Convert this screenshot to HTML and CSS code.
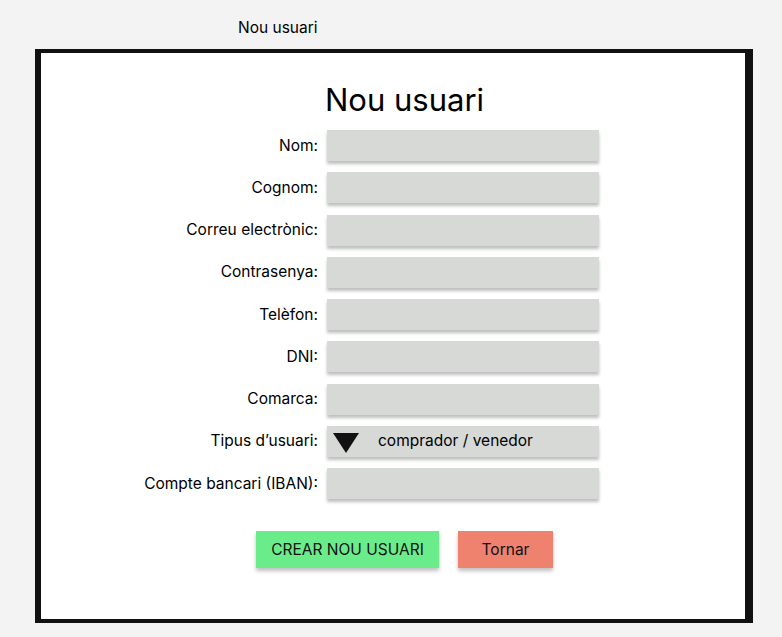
FILE: index.html
```html
<!DOCTYPE html>
<html lang="ca">
<head>
  <meta charset="UTF-8">
  <title>Nou usuari</title>
  <link rel="stylesheet" href="styles.css">
</head>
<body>
  <div class="page-title">Nou usuari</div>

  <!-- Frame -->
  <div class="frame">
    <h1 class="heading">Nou usuari</h1>

    <form class="user-form" onsubmit="return false">
      <label for="nom">Nom:</label>
      <input type="text" id="nom" class="field">

      <label for="cognom">Cognom:</label>
      <input type="text" id="cognom" class="field">

      <label for="correu">Correu electrònic:</label>
      <input type="text" id="correu" class="field">

      <label for="contrasenya">Contrasenya:</label>
      <input type="password" id="contrasenya" class="field">

      <label for="telefon">Telèfon:</label>
      <input type="text" id="telefon" class="field">

      <label for="dni">DNI:</label>
      <input type="text" id="dni" class="field">

      <label for="comarca">Comarca:</label>
      <input type="text" id="comarca" class="field">

      <label>Tipus d’usuari:</label>
      <div class="field select">
        <svg class="arrow" width="26" height="20" viewBox="0 0 26 20"><polygon points="0,0 26,0 13,20" fill="#111"/></svg>
        <span>comprador / venedor</span>
      </div>

      <label for="iban">Compte bancari (IBAN):</label>
      <input type="text" id="iban" class="field">
    </form>

    <div class="actions">
      <button class="btn btn-create">CREAR NOU USUARI</button>
      <button class="btn btn-back">Tornar</button>
    </div>
  </div>
</body>
</html>
```

FILE: styles.css
```css
body {
  margin: 0;
  background: #f3f3f3;
  font-family: Inter, "Liberation Sans", sans-serif;
  font-size: 15.5px;
  color: #000;
}
.page-title {
  padding: 19px 0 0 238px;
  line-height: 18px;
}
.frame {
  box-sizing: border-box;
  width: 718px;
  height: 574px;
  margin: 12px 0 0 35px;
  background: #fff;
  border: 4px solid #111;
  border-left-width: 6px;
  border-right-width: 8px;
}
.heading {
  margin: 28px 0 0 0;
  padding-left: 284px;
  font-size: 31px;
  font-weight: 400;
  line-height: 37px;
}
.user-form {
  display: grid;
  grid-template-columns: 181px 272px;
  column-gap: 9px;
  row-gap: 11.25px;
  align-items: center;
  margin: 12px 0 0 96px;
}
.user-form label {
  text-align: right;
  line-height: 18px;
}
.field {
  box-sizing: border-box;
  height: 31px;
  margin: 0;
  border: none;
  background: #d6d9d6;
  box-shadow: 0 3px 3px rgba(0, 0, 0, 0.25);
  font: inherit;
  padding: 0 8px;
}
.select {
  display: flex;
  align-items: center;
  gap: 19px;
  padding-left: 6px;
}
.select .arrow {
  margin-top: 3px;
  flex-shrink: 0;
}
.select span {
  margin-top: -2px;
}
.actions {
  display: flex;
  gap: 19px;
  margin: 32px 0 0 215px;
}
.btn {
  height: 37px;
  border: none;
  font: inherit;
  color: #111;
  box-shadow: 0 3px 4px rgba(0, 0, 0, 0.25);
  cursor: pointer;
}
.btn-create {
  width: 183px;
  background: #6bec8b;
}
.btn-back {
  width: 95px;
  background: #ee826f;
}
```
